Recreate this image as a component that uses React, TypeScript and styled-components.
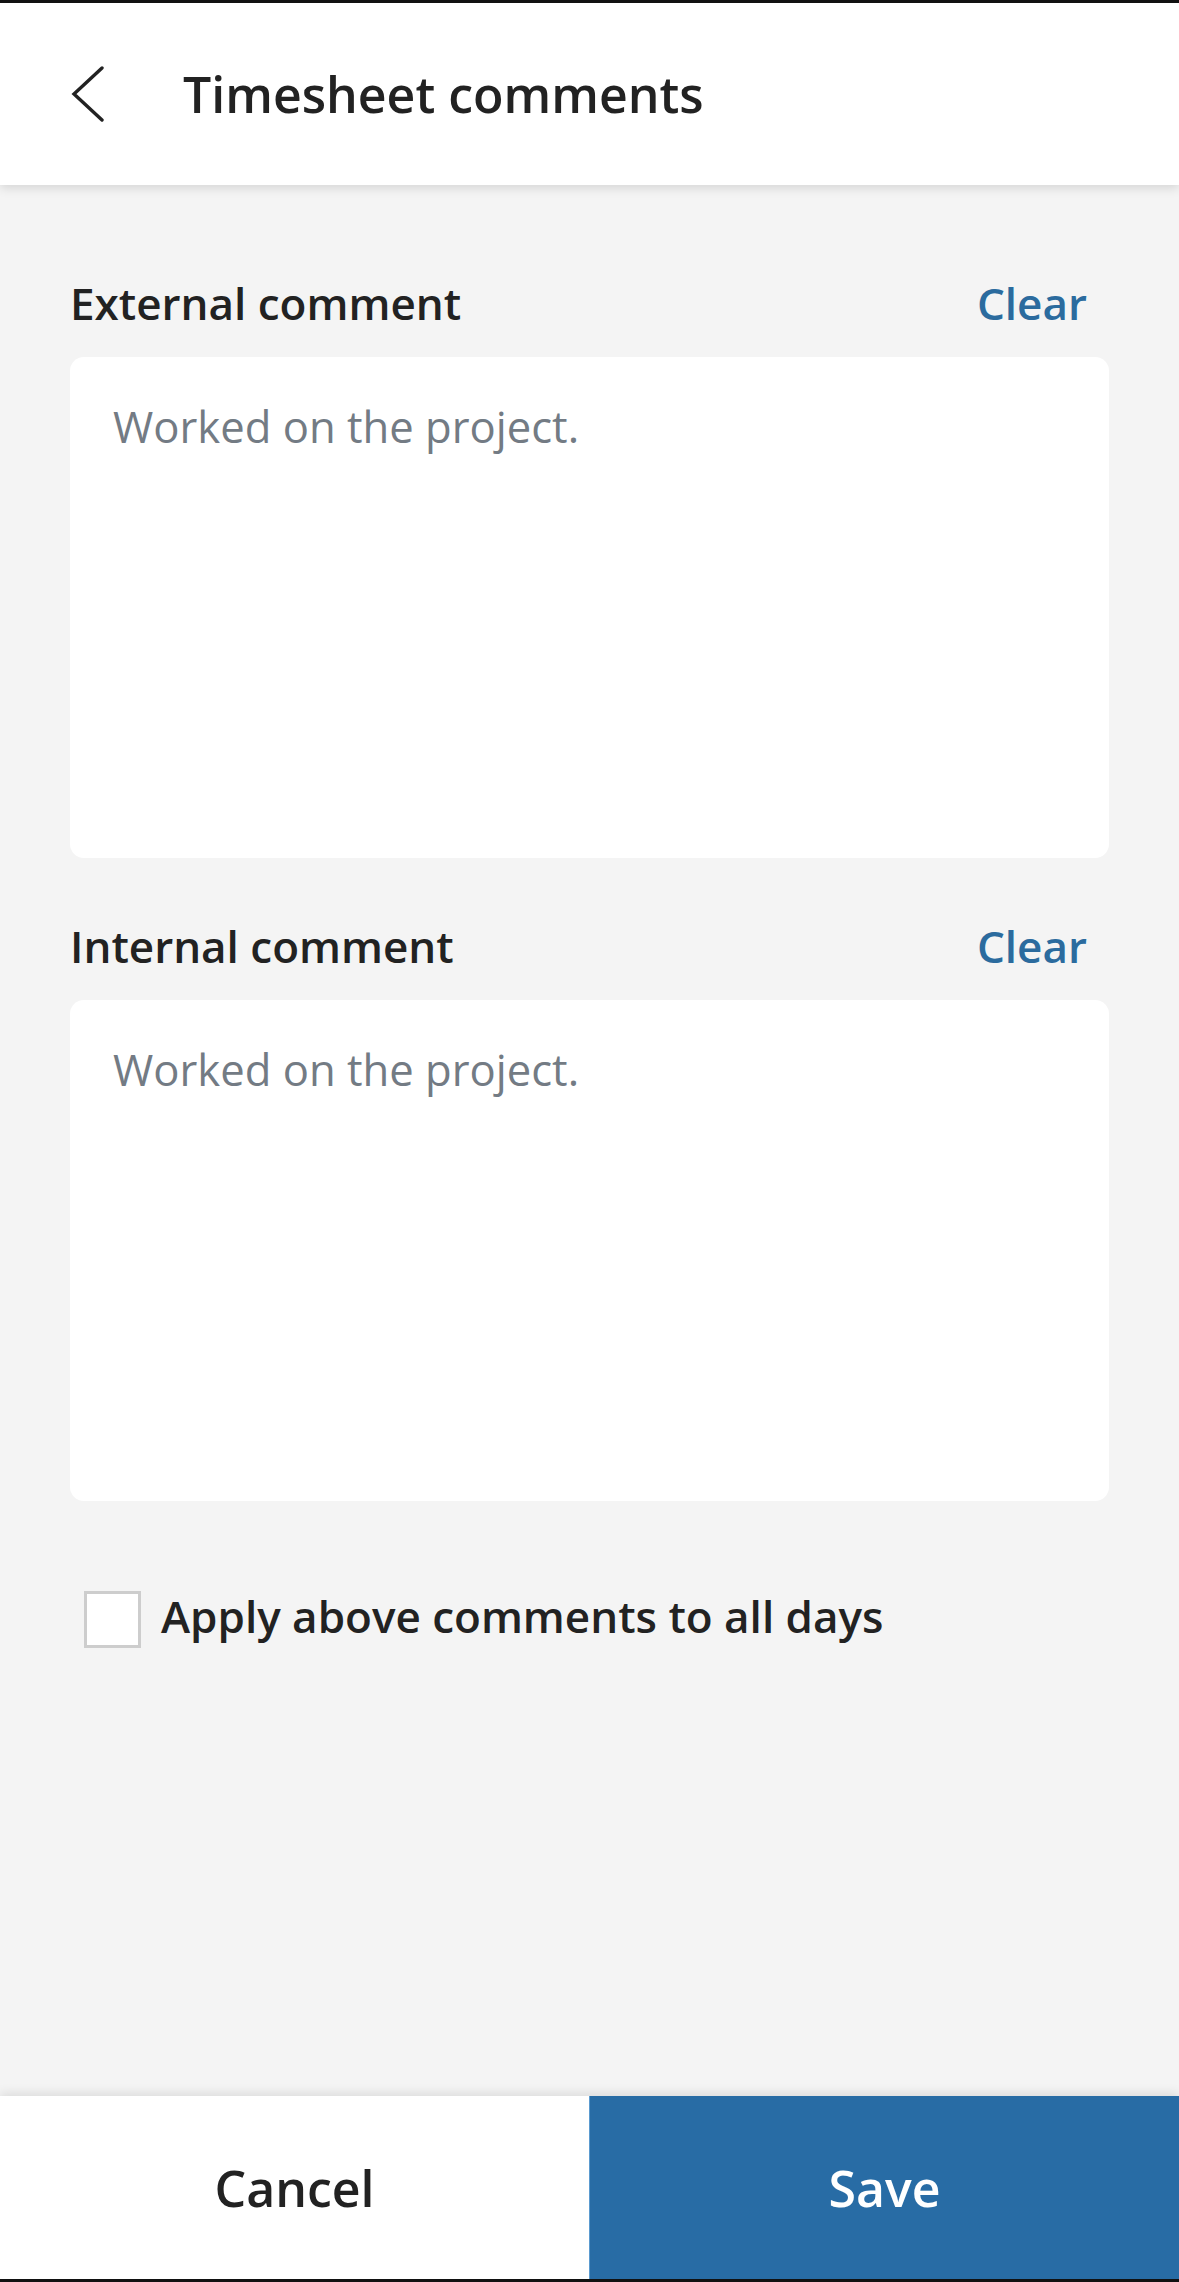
import React from "react";
import styled, { createGlobalStyle } from "styled-components";

const Global = createGlobalStyle`
  html, body { margin: 0; padding: 0; background: #f4f4f4; }
  body { font-family: "Open Sans", "Noto Sans", sans-serif; }
  * { box-sizing: border-box; }
`;

const Screen = styled.div`
  width: 1179px;
  height: 2282px;
  display: flex;
  flex-direction: column;
  background: #f4f4f4;
  border-top: 3px solid #111;
  border-bottom: 3px solid #111;
  overflow: hidden;
`;

const Header = styled.header`
  height: 182px;
  flex: none;
  background: #fff;
  display: flex;
  align-items: center;
  padding-left: 70px;
  box-shadow: 0 3px 10px rgba(0, 0, 0, 0.13);
  position: relative;
  z-index: 1;
`;

const BackButton = styled.button`
  border: none;
  background: none;
  padding: 0;
  width: 36px;
  height: 56px;
  display: flex;
  align-items: center;
  cursor: pointer;
  margin-right: 77px;
`;

const Title = styled.h1`
  margin: 0;
  font-size: 50px;
  font-weight: 600;
  color: #222;
  line-height: 1.36;
`;

const Content = styled.main`
  flex: 1;
  padding: 88px 70px 0;
  display: flex;
  flex-direction: column;
`;

const Section = styled.section<{ $gapAfter: number }>`
  display: flex;
  flex-direction: column;
  gap: 23px;
  margin-bottom: ${(p) => p.$gapAfter}px;
`;

const LabelRow = styled.div`
  display: flex;
  justify-content: space-between;
  align-items: baseline;
  padding-right: 22px;
`;

const Label = styled.label`
  font-size: 44px;
  font-weight: 600;
  color: #222;
  line-height: 61px;
`;

const ClearLink = styled.button`
  border: none;
  background: none;
  padding: 0;
  font-family: inherit;
  font-size: 44px;
  font-weight: 600;
  color: #2b6b9e;
  line-height: 61px;
  cursor: pointer;
`;

const TextBox = styled.textarea`
  height: 501px;
  width: 100%;
  resize: none;
  border: none;
  border-radius: 14px;
  background: #fff;
  padding: 39px 43px;
  font-family: inherit;
  font-size: 43.6px;
  line-height: 61px;
  color: #222;
  outline: none;
  &::placeholder {
    color: #737b84;
  }
`;

const CheckRow = styled.label`
  display: flex;
  align-items: center;
  gap: 20px;
  padding-left: 14px;
  cursor: pointer;
`;

const CheckBox = styled.span`
  width: 57px;
  height: 57px;
  border: 3px solid #cdcdcd;
  background: #fff;
  flex: none;
  margin-top: 6px;
`;

const CheckText = styled.span`
  font-size: 44px;
  font-weight: 600;
  color: #222;
  line-height: 61px;
`;

const Footer = styled.footer`
  height: 183px;
  flex: none;
  display: grid;
  grid-template-columns: 589px 1fr;
  box-shadow: 0 -3px 10px rgba(0, 0, 0, 0.1);
  position: relative;
`;

const FooterButton = styled.button<{ $primary?: boolean }>`
  border: none;
  border-left: ${(p) => (p.$primary ? "1px solid #5b9bd0" : "none")};
  background: ${(p) => (p.$primary ? "#286ca5" : "#fff")};
  color: ${(p) => (p.$primary ? "#fff" : "#222")};
  font-family: inherit;
  font-size: 50px;
  font-weight: 600;
  cursor: pointer;
  padding: 0;
`;

const Chevron = () => (
  <svg width="36" height="56" viewBox="0 0 36 56" fill="none">
    <path d="M32 2 L4 28 L32 54" stroke="#222" strokeWidth="3.4" strokeLinecap="round" strokeLinejoin="miter" />
  </svg>
);

export default function App() {
  return (
    <>
      <Global />
      <Screen>
        <Header>
          <BackButton aria-label="Back">
            <Chevron />
          </BackButton>
          <Title>Timesheet comments</Title>
        </Header>
        <Content>
          <Section $gapAfter={58}>
            <LabelRow>
              <Label>External comment</Label>
              <ClearLink>Clear</ClearLink>
            </LabelRow>
            <TextBox placeholder="Worked on the project." />
          </Section>
          <Section $gapAfter={84}>
            <LabelRow>
              <Label>Internal comment</Label>
              <ClearLink>Clear</ClearLink>
            </LabelRow>
            <TextBox placeholder="Worked on the project." />
          </Section>
          <CheckRow>
            <CheckBox />
            <CheckText>Apply above comments to all days</CheckText>
          </CheckRow>
        </Content>
        <Footer>
          <FooterButton>Cancel</FooterButton>
          <FooterButton $primary>Save</FooterButton>
        </Footer>
      </Screen>
    </>
  );
}
